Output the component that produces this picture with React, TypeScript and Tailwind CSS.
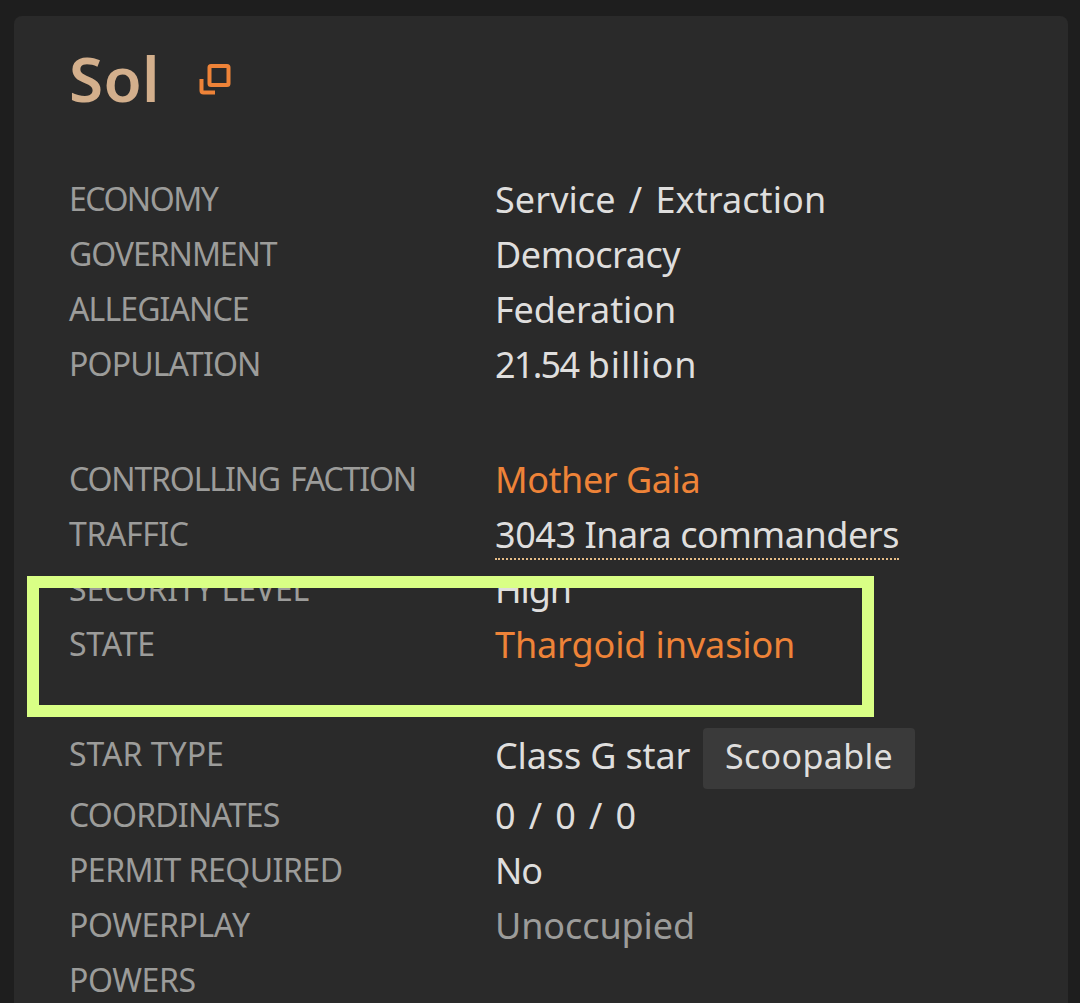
import { ReactNode } from 'react';

interface InfoItem {
  label: string;
  labelClass?: string;
  value?: ReactNode;
  valueClass?: string;
}

const population = (
  <>
    <span className="tracking-[-1.75px]">21.54</span> <span className="tracking-[0.9px]">billion</span>
  </>
);

const politics: InfoItem[] = [
  { label: 'Economy', labelClass: 'tracking-[-1.5px]', value: 'Service / Extraction', valueClass: 'text-[#dfdedd] tracking-[0.07px] [word-spacing:3.8px]' },
  { label: 'Government', labelClass: 'tracking-[-1.05px]', value: 'Democracy', valueClass: 'text-[#dfdedd] tracking-[-0.45px]' },
  { label: 'Allegiance', labelClass: 'tracking-[-0.9px]', value: 'Federation', valueClass: 'text-[#dfdedd] tracking-[-0.1px]' },
  { label: 'Population', labelClass: 'tracking-[-0.85px]', value: population, valueClass: 'text-[#dfdedd]' },
];

const status: InfoItem[] = [
  { label: 'Controlling faction', labelClass: 'tracking-[-1.15px] [word-spacing:3px]', value: 'Mother Gaia', valueClass: 'text-[#ee8338] tracking-[-0.45px]' },
  { label: 'Traffic', labelClass: 'tracking-[-0.4px]', value: '3043 Inara commanders', valueClass: 'inline-block leading-[46px] text-[#dfdedd] tracking-[-0.45px] border-b-2 border-dotted border-[#e6bd88]' },
  { label: 'Security level', labelClass: 'tracking-[-0.15px]', value: 'High', valueClass: 'text-[#dfdedd] tracking-[-1.1px]' },
  { label: 'State', labelClass: 'tracking-[-0.2px]', value: 'Thargoid invasion', valueClass: 'text-[#ee8338] tracking-[-0.12px]' },
];

const details: InfoItem[] = [
  { label: 'Coordinates', labelClass: 'tracking-[-0.8px]', value: '0 / 0 / 0', valueClass: 'text-[#dfdedd] [word-spacing:3.8px]' },
  { label: 'Permit required', labelClass: 'tracking-[-0.5px]', value: 'No', valueClass: 'text-[#dfdedd] tracking-[-1px]' },
  { label: 'Powerplay', labelClass: 'tracking-[-0.4px]', value: 'Unoccupied', valueClass: 'text-[#9c9c9a] tracking-[-0.1px]' },
  { label: 'Powers', labelClass: 'tracking-[-0.4px]' },
];

const InfoRow: React.FC<InfoItem> = ({ label, labelClass, value, valueClass }) => (
  <div className="flex h-[55px]">
    <dt className="w-[426px] shrink-0 text-[32px] leading-[53px] uppercase text-[#9c9c9a]">
      <span className={labelClass}>{label}</span>
    </dt>
    <dd className="text-[36px] leading-[55px]">
      <span className={valueClass}>{value}</span>
    </dd>
  </div>
);

const App: React.FC = () => {
  return (
    <div className="relative h-[1003px] w-[1080px] overflow-hidden whitespace-nowrap bg-[#1e1e1e] pl-[14px] pr-3 pt-4 font-['Noto_Sans',sans-serif]">
      <main className="h-full rounded-t-lg bg-[#2a2a2a] pl-[55px]">
        <header className="flex h-[156px] pt-[22px]">
          <h1 className="w-[128px] text-[62px] font-semibold leading-[80px] tracking-[0.3px] text-[#d3af8c]">Sol</h1>
          <svg className="mt-[24px] h-[34px] w-[34px]" viewBox="0 0 34 34" fill="none" stroke="#ee8338" strokeWidth="4">
            <rect x="12.5" y="4" width="19" height="19" rx="1.5" />
            <path d="M4.5 17v11.5q0 2 2 2h11.5" />
          </svg>
        </header>

        <dl>
          {politics.map((item) => <InfoRow key={item.label} {...item} />)}
        </dl>
        <dl className="mt-[60px]">
          {status.map((item) => <InfoRow key={item.label} {...item} />)}
        </dl>
        <dl className="mt-[55px]">
          <div className="flex h-[61px]">
            <dt className="w-[426px] shrink-0 text-[32px] leading-[53px] uppercase text-[#9c9c9a]">Star type</dt>
            <dd className="flex text-[36px] leading-[55px] text-[#dfdedd]">
              <span className="w-[208px] pt-px tracking-[-0.15px]">Class G star</span>
              <span className="mt-px h-[61px] w-[212px] rounded bg-[#3a3a3a] text-center text-[34px] leading-[57px] tracking-[0.35px]">
                Scoopable
              </span>
            </dd>
          </div>
          {details.map((item) => <InfoRow key={item.label} {...item} />)}
        </dl>
      </main>

      {/* highlight frame over the system state */}
      <div className="absolute left-[27px] top-[576px] h-[141px] w-[847px] border-[12px] border-[#d9ff85]" />
    </div>
  );
};

export default App;
